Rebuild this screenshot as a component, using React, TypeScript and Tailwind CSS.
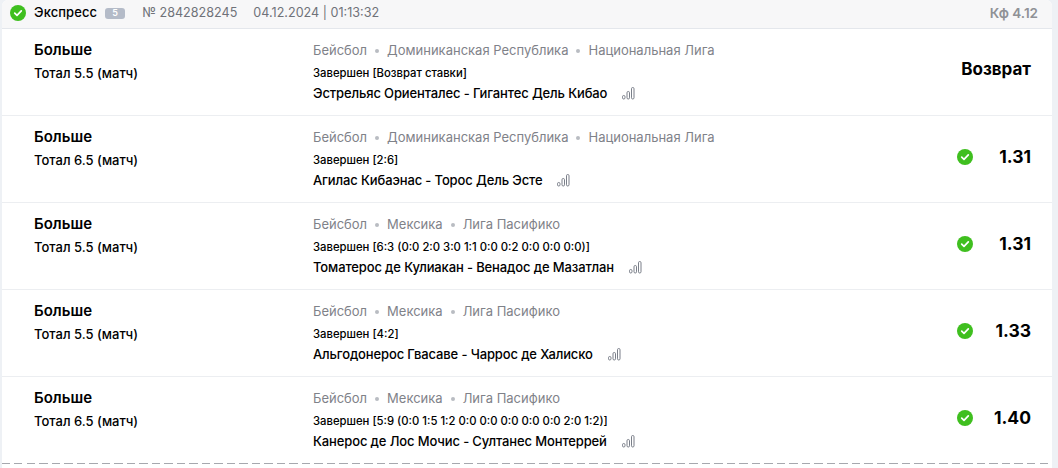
const font = { fontFamily: "Inter, 'Noto Sans', sans-serif" };

function Check({ size }: { size: number }) {
  return (
    <svg width={size} height={size} viewBox="0 0 16 16" className="shrink-0">
      <circle cx="8" cy="8" r="8" fill="#3fbf1f" />
      <path d="M4.7 8.2 7 10.4 11.3 5.9" fill="none" stroke="#fff" strokeWidth="1.7" strokeLinecap="round" strokeLinejoin="round" />
    </svg>
  );
}

function Bars() {
  return (
    <svg width="13" height="13" viewBox="0 0 13 13" className="shrink-0" fill="none" stroke="#7a7f89" strokeWidth="1">
      <rect x="0.5" y="8.5" width="2.5" height="3.5" rx="1.2" />
      <rect x="5" y="4.5" width="2.5" height="7.5" rx="1.2" />
      <rect x="9.5" y="0.5" width="2.5" height="11.5" rx="1.2" />
    </svg>
  );
}

const rows = [
  { total: "Тотал 5.5 (матч)", path: ["Бейсбол", "Доминиканская Республика", "Национальная Лига"], status: "Завершен [Возврат ставки]", teams: "Эстрельяс Ориенталес - Гигантес Дель Кибао", odd: null },
  { total: "Тотал 6.5 (матч)", path: ["Бейсбол", "Доминиканская Республика", "Национальная Лига"], status: "Завершен [2:6]", teams: "Агилас Кибаэнас - Торос Дель Эсте", odd: "1.31" },
  { total: "Тотал 5.5 (матч)", path: ["Бейсбол", "Мексика", "Лига Пасифико"], status: "Завершен [6:3 (0:0 2:0 3:0 1:1 0:0 0:2 0:0 0:0 0:0)]", teams: "Томатерос де Кулиакан - Венадос де Мазатлан", odd: "1.31" },
  { total: "Тотал 5.5 (матч)", path: ["Бейсбол", "Мексика", "Лига Пасифико"], status: "Завершен [4:2]", teams: "Альгодонерос Гвасаве - Чаррос де Халиско", odd: "1.33" },
  { total: "Тотал 6.5 (матч)", path: ["Бейсбол", "Мексика", "Лига Пасифико"], status: "Завершен [5:9 (0:0 1:5 1:2 0:0 0:0 0:0 0:0 0:0 2:0 1:2)]", teams: "Канерос де Лос Мочис - Султанес Монтеррей", odd: "1.40" },
];

export default function App() {
  return (
    <div style={font} className="h-[468px] w-[1058px] overflow-hidden bg-[#eef1f5] pl-[2px] pr-[6px]">
      <div className="h-[468px] overflow-hidden rounded-t-[6px] bg-white">
        <div className="flex h-[29px] items-center border-b border-[#e4e7ec] bg-[#f7f7f8] pl-[8px] pr-[14px] pb-[2px]">
          <Check size={16} />
          <span className="ml-[8px] text-[13px] tracking-[0.1px] font-medium text-black">Экспресс</span>
          <span className="ml-[8px] flex h-[11px] w-[20px] items-center justify-center rounded-[3px] bg-[#b4bbc8] text-[9px] font-semibold text-white">5</span>
          <span className="ml-[17px] text-[12.6px] text-[#6f7279]">№ 2842828245</span>
          <span className="ml-[16px] text-[12.6px] text-[#6f7279]">04.12.2024 | 01:13:32</span>
          <span className="ml-auto text-[13.5px] font-semibold text-[#8f9196]">Кф 4.12</span>
        </div>
        {rows.map((r, i) => (
          <div key={i} className={i < 4 ? "flex h-[87px] border-b border-[#eceef1] pl-[32px] pr-[21px]" : "flex h-[86px] pl-[32px] pr-[21px]"}>
            <div className="w-[279px] pt-[11px]">
              <div className="text-[15px] leading-[20px] font-semibold text-black">Больше</div>
              <div className="mt-[4px] text-[13px] leading-[18px] font-medium text-black">{r.total}</div>
            </div>
            <div className="flex-1 pt-[12px]">
              <div className="flex h-[20px] items-center text-[13px] text-[#7f8289]">
                {r.path.map((p, j) => (
                  <span key={j} className="flex items-center">
                    {j > 0 && <span className="mx-[8px] h-[4px] w-[4px] rounded-full bg-[#b9bcc2]" />}
                    {p}
                  </span>
                ))}
              </div>
              <div className="mt-[4px] text-[11.3px] leading-[16px] font-medium text-black">{r.status}</div>
              <div className="mt-[3px] flex h-[19px] items-center text-[13px] tracking-[-0.13px] font-medium text-black">
                {r.teams}
                <span className="ml-[15px] -mt-[1px]"><Bars /></span>
              </div>
            </div>
            <div className="flex items-center pb-[4px]">
              {r.odd ? (
                <>
                  <Check size={16} />
                  <span className="w-[58px] text-right text-[17.5px] font-bold text-black">{r.odd}</span>
                </>
              ) : (
                <span className="text-[17px] font-bold text-black">Возврат</span>
              )}
            </div>
          </div>
        ))}
        <div className="h-px bg-[repeating-linear-gradient(90deg,#a6a8ae_0_8px,transparent_8px_12.5px)]" />
      </div>
    </div>
  );
}
